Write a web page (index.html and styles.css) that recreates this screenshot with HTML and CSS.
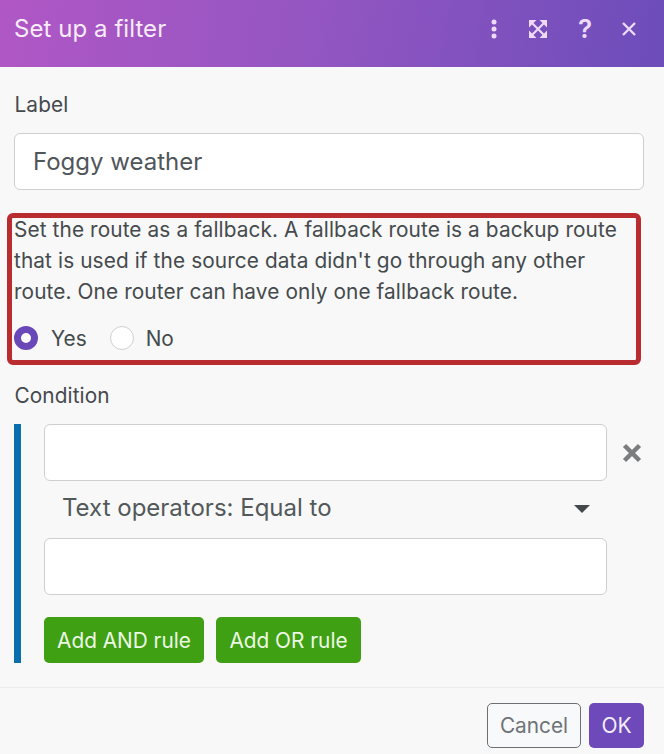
FILE: index.html
```html
<!DOCTYPE html>
<html lang="en">
<head>
<meta charset="utf-8">
<title>Set up a filter</title>
<link rel="stylesheet" href="styles.css">
</head>
<body>
<div class="dialog">
  <header class="head">
    <h1 class="title">Set up a filter</h1>
    <div class="tools">
      <svg class="ico dots" viewBox="0 0 10 20"><circle cx="5" cy="3" r="2.500"/><circle cx="5" cy="10" r="2.500"/><circle cx="5" cy="17" r="2.500"/></svg>
      <svg class="ico expand" viewBox="0 0 20 20"><path d="M1 1H8.500L5.500 4 10 8.500 14.500 4 11.500 1H19V8.500L16 5.500 11.500 10 16 14.500 19 11.500V19H11.500L14.500 16 10 11.500 5.500 16 8.500 19H1V11.500L4 14.500 8.500 10 4 5.500 1 8.500Z"/></svg>
      <span class="help">?</span>
      <svg class="ico close" viewBox="0 0 16 16"><path d="M2 2l12 12M14 2L2 14"/></svg>
    </div>
  </header>
  <main class="body">
    <div class="lbl">Label</div>
    <div class="input value">Foggy weather</div>
    <section class="fallback">
      <p class="desc">Set the route as a fallback. A fallback route is a backup route that is used if the source data didn't go through any other route. One router can have only one fallback route.</p>
      <div class="radios">
        <span class="radio on"></span><span class="rtext">Yes</span>
        <span class="radio"></span><span class="rtext">No</span>
      </div>
    </section>
    <div class="lbl cond">Condition</div>
    <div class="rule">
      <div class="rule-main">
        <div class="row">
          <div class="input small"></div>
          <svg class="remove" viewBox="0 0 20 20"><path d="M2.500 2.500l15 15M17.500 2.500l-15 15"/></svg>
        </div>
        <div class="select"><span>Text operators: Equal to</span><i class="caret"></i></div>
        <div class="input small second"></div>
        <div class="adds">
          <button class="btn green and">Add AND rule</button>
          <button class="btn green or">Add OR rule</button>
        </div>
      </div>
    </div>
  </main>
  <footer class="foot">
    <button class="btn cancel">Cancel</button>
    <button class="btn ok">OK</button>
  </footer>
</div>
</body>
</html>
```
FILE: styles.css
```css
* { box-sizing: border-box; }
html, body { margin: 0; height: 100%; }
body { background: #f8f8f8; font-family: Inter, "Liberation Sans", sans-serif; color: #454a4d; overflow: hidden; }
.dialog { width: 664px; height: 754px; display: flex; flex-direction: column; }
.head { height: 67px; flex: none; display: flex; align-items: center; justify-content: space-between; padding: 0 27px 10px 14px; background: linear-gradient(100deg, #b057c5 0%, #9556c2 45%, #6c4dba 100%); }
.title { margin: 0; font-size: 24px; font-weight: 400; letter-spacing: .06px; color: #f9ecfb; }
.tools { display: flex; align-items: center; }
.ico { display: block; }
.dots { width: 10px; height: 20px; fill: #eed9f6; margin-right: 29px; }
.expand { width: 20px; height: 20px; fill: #eed9f6; margin-right: 30px; }
.help { width: 14px; font-size: 26px; font-weight: 600; line-height: 26px; color: #eed9f6; margin-right: 29px; text-align: center; }
.close { width: 16px; height: 16px; fill: none; stroke: #eed9f6; stroke-width: 2.400; }
.body { flex: none; height: 621px; padding: 25px 20px 0 14px; border-bottom: 1px solid #ececec; }
.lbl { font-size: 20.800px; line-height: 26px; color: #45494c; padding-left: .5px; letter-spacing: .1px; }
.input { background: #fff; border: 1px solid #cfcfcf; border-radius: 6px; }
.value { margin-top: 15px; height: 57px; padding-left: 18px; font-size: 24px; line-height: 55px; color: #50565a; }
.fallback { margin: 23px 3px 0 -7px; height: 152px; border: 5px solid #b92d31; border-radius: 6px; padding: 0 2px; }
.desc { margin: -4px 0 0; font-size: 20.800px; line-height: 31.200px; letter-spacing: .11px; }
.radios { display: flex; align-items: center; margin-top: 18px; }
.radio { width: 24px; height: 24px; border-radius: 50%; background: #fff; border: 1px solid #cfcfcf; margin-right: 12px; }
.radio.on { border: 7px solid #6b48b8; margin-right: 13px; }
.rtext { font-size: 20.800px; margin-right: 23px; }
.cond { margin-top: 18px; }
.rule { margin-top: 15px; height: 239px; border-left: 7px solid #0a6eaf; padding-left: 23px; }
.row { display: flex; align-items: center; }
.small { height: 57px; width: 563px; }
.remove { width: 20px; height: 20px; fill: none; stroke: #7b7d7e; stroke-width: 4.500; margin-left: 15px; }
.select { width: 563px; height: 57px; display: flex; align-items: center; justify-content: space-between; padding: 0 17px 5px 18px; font-size: 24px; color: #53585b; }
.caret { width: 0; height: 0; margin-top: 3px; border-left: 8px solid transparent; border-right: 8px solid transparent; border-top: 8px solid #44484a; }
.adds { display: flex; gap: 12px; margin-top: 22px; }
.btn { font-family: inherit; border-radius: 5px; border: 0; height: 46px; font-size: 20.800px; padding: 0; }
.green { background: #3ea012; color: #edf8e6; }
.and { width: 160px; }
.or { width: 145px; }
.foot { flex: 1; display: flex; justify-content: flex-end; gap: 8px; padding: 15px 20px 0 0; }
.cancel { width: 94px; height: 45px; background: #f8f9fa; border: 1px solid #6b7074; color: #6e7377; }
.ok { width: 55px; height: 45px; background: #6d49b9; color: #f4eefa; font-size: 21px; }
```
